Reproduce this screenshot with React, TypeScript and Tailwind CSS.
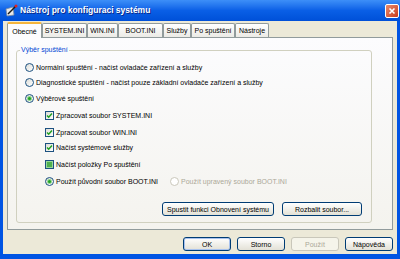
import React from 'react'

const tabs = [
  { label: 'Obecné', w: 'w-[35px]' },
  { label: 'SYSTEM.INI', w: 'w-[45px]' },
  { label: 'WIN.INI', w: 'w-[31px]' },
  { label: 'BOOT.INI', w: 'w-[45px]' },
  { label: 'Služby', w: 'w-[28px]' },
  { label: 'Po spuštění', w: 'w-[44px]' },
  { label: 'Nástroje', w: 'w-[34px]' },
]

const Radio = ({ checked = false, disabled = false }: { checked?: boolean; disabled?: boolean }) => (
  <span
    className={
      disabled
        ? 'flex h-[9px] w-[9px] shrink-0 items-center justify-center rounded-full border border-[#cac8bb] bg-white'
        : 'flex h-[9px] w-[9px] shrink-0 items-center justify-center rounded-full border border-[#1c5180] bg-linear-to-br from-[#dcdcd7] to-white'
    }
  >
    {checked && <span className="h-[3px] w-[3px] rounded-full bg-[#21a121] shadow-[0_0_0_1px_#8fd88f]" />}
  </span>
)

const Check = ({ mixed = false }: { mixed?: boolean }) => (
  <span className="flex h-[9px] w-[9px] shrink-0 items-center justify-center border border-[#1c5180] bg-linear-to-br from-[#dcdcd7] to-white">
    {mixed ? (
      <span className="h-[5px] w-[5px] bg-[#4fb04f] shadow-[0_0_0_1px_#9ad89a]" />
    ) : (
      <svg width="7" height="7" viewBox="0 0 7 7">
        <path d="M1 3.4 L2.7 5.2 L6 1.6" fill="none" stroke="#21a121" strokeWidth="1.5" />
      </svg>
    )}
  </span>
)

const Btn = ({
  children,
  w,
  disabled = false,
  def = false,
}: {
  children: React.ReactNode
  w: string
  disabled?: boolean
  def?: boolean
}) => (
  <div
    className={
      w +
      (disabled
        ? ' flex h-[14px] items-center justify-center rounded-[3px] border border-[#c9c7ba] bg-[#f5f4ea] text-[#aca899]'
        : def
          ? ' flex h-[14px] items-center justify-center rounded-[3px] border border-[#003c74] bg-linear-to-b from-white to-[#e3e1d6] shadow-[inset_0_0_0_1px_#a8c2ee]'
          : ' flex h-[14px] items-center justify-center rounded-[3px] border border-[#003c74] bg-linear-to-b from-white to-[#e3e1d6]')
    }
  >
    {children}
  </div>
)

export default function App() {
  return (
    <div className="flex h-[259px] w-[400px] flex-col overflow-hidden bg-[#0054e3] font-['Liberation_Sans',Arial,sans-serif] text-[7px] leading-[9px] text-black">
      {/* Title bar */}
      <div className="flex h-[21px] items-center bg-linear-to-b from-[#3d8ff8] via-[#0a5fe6] to-[#0050d8] pl-[5px] pr-[4px]">
        <svg width="13" height="13" viewBox="0 0 13 13" className="shrink-0">
          <path d="M1 5 L8 3 L9 11 L2 12 Z" fill="#e8e8e8" stroke="#7a8aa0" strokeWidth="0.8" />
          <path d="M3 10 L11 2" stroke="#1a1a1a" strokeWidth="1.4" />
          <circle cx="11" cy="2" r="1.5" fill="#e02020" />
        </svg>
        <span className="ml-[2px] text-[8.5px] font-bold text-white [text-shadow:1px_1px_0_#0c2a8a]">
          Nástroj pro konfiguraci systému
        </span>
        <div className="ml-auto mr-[-3px] flex h-[14px] w-[14px] items-center justify-center rounded-[2px] border border-white bg-linear-to-br from-[#e98a6c] to-[#c8391a]">
          <svg width="8" height="8" viewBox="0 0 8 8">
            <path d="M1.5 1.5 L6.5 6.5 M6.5 1.5 L1.5 6.5" stroke="white" strokeWidth="1.6" />
          </svg>
        </div>
      </div>

      {/* Window body */}
      <div className="mx-[3px] mb-[5px] flex flex-1 flex-col bg-[#ece9d8] px-[4px] pt-[1px]">
        {/* Tabs */}
        <div className="flex h-[15px] items-end">
          {tabs.map((t, i) =>
            i === 0 ? (
              <div
                key={t.label}
                className={t.w + ' relative z-10 mb-[-1px] flex h-[16px] items-center justify-center rounded-t-[2px] border-x border-t-2 border-x-[#919b9c] border-t-[#f5b53c] bg-[#fcfcfe]'}
              >
                {t.label}
              </div>
            ) : (
              <div
                key={t.label}
                className={t.w + ' flex h-[14px] items-center justify-center rounded-t-[2px] border-x border-t border-[#919b9c] bg-linear-to-b from-white to-[#ecebe6]'}
              >
                {t.label}
              </div>
            ),
          )}
        </div>

        {/* Panel */}
        <div className="h-[193px] border border-[#919b9c] bg-linear-to-b from-[#fcfcfe] to-[#f4f3ee] pl-[8px] pt-[12px]">
          <div className="relative flex h-[173px] w-[356px] flex-col rounded-[3px] border border-[#d0d0bf] pl-[8px] pt-[8px]">
            <span className="absolute left-[3px] top-[-6px] bg-[#fbfbfc] px-[1px] text-[#0046d5]">Výběr spuštění</span>

            <div className="flex h-[16px] items-center gap-[2px]">
              <Radio />
              <span>Normální spuštění - načíst ovladače zařízení a služby</span>
            </div>
            <div className="flex h-[15px] items-center gap-[2px]">
              <Radio />
              <span>Diagnostické spuštění - načíst pouze základní ovladače zařízení a služby</span>
            </div>
            <div className="flex h-[17px] items-center gap-[2px]">
              <Radio checked />
              <span>Výběrové spuštění</span>
            </div>

            <div className="ml-[20px] flex flex-col">
              <div className="flex h-[17px] items-center gap-[2px]">
                <Check />
                <span>Zpracovat soubor SYSTEM.INI</span>
              </div>
              <div className="flex h-[16px] items-center gap-[2px]">
                <Check />
                <span>Zpracovat soubor WIN.INI</span>
              </div>
              <div className="flex h-[15px] items-center gap-[2px]">
                <Check />
                <span>Načíst systémové služby</span>
              </div>
              <div className="flex h-[18px] items-center gap-[2px]">
                <Check mixed />
                <span>Načíst položky Po spuštění</span>
              </div>
              <div className="flex h-[16px] items-center">
                <Radio checked />
                <span className="ml-[2px] w-[114px]">Použít původní soubor BOOT.INI</span>
                <Radio disabled />
                <span className="ml-[2px] text-[#aca899]">Použít upravený soubor BOOT.INI</span>
              </div>
            </div>

            <div className="mt-[13px] flex justify-end gap-[8px] pr-[9px]">
              <Btn w="w-[112px]">Spustit funkci Obnovení systému</Btn>
              <Btn w="w-[80px]">Rozbalit soubor...</Btn>
            </div>
          </div>
        </div>

        {/* Dialog buttons */}
        <div className="mt-[7px] flex justify-end gap-[6px]">
          <Btn w="w-[48px]" def>
            OK
          </Btn>
          <Btn w="w-[48px]">Storno</Btn>
          <Btn w="w-[48px]" disabled>
            Použít
          </Btn>
          <Btn w="w-[48px]">Nápověda</Btn>
        </div>
      </div>
    </div>
  )
}
